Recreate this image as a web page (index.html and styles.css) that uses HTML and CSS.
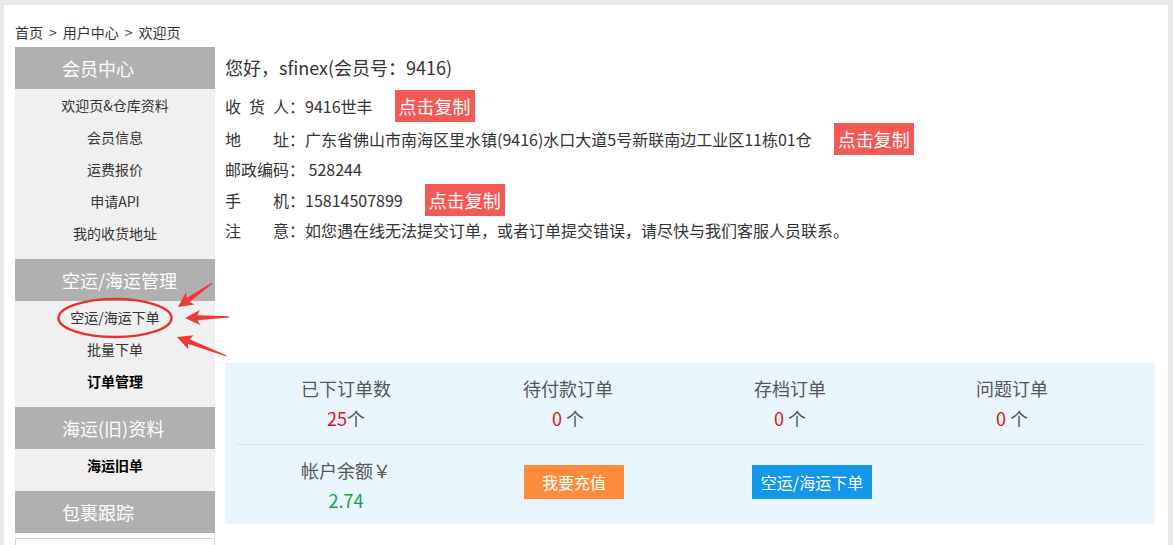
FILE: index.html
```html
<!DOCTYPE html>
<html lang="zh-CN">
<head>
    <meta charset="UTF-8">
    <meta name="viewport" content="width=device-width, initial-scale=1.0">
    <title>欢迎页</title>
    <link rel="stylesheet" href="styles.css">
</head>
<body>
    <div class="page">
        <div class="crumb">首页<span class="sep">&gt;</span>用户中心<span class="sep">&gt;</span>欢迎页</div>

        <div class="layout">
            <aside class="side">
                <div class="side-head">会员中心</div>
                <ul class="side-list">
                    <li>欢迎页&amp;仓库资料</li>
                    <li>会员信息</li>
                    <li>运费报价</li>
                    <li>申请API</li>
                    <li>我的收货地址</li>
                </ul>

                <div class="side-head">空运/海运管理</div>
                <ul class="side-list">
                    <li>空运/海运下单</li>
                    <li>批量下单</li>
                    <li class="strong">订单管理</li>
                </ul>

                <div class="side-head">海运(旧)资料</div>
                <ul class="side-list">
                    <li class="strong">海运旧单</li>
                </ul>

                <div class="side-head">包裹跟踪</div>
                <div class="side-box"></div>
            </aside>

            <main class="main">
                <div class="hello">您好，sfinex(会员号：9416)</div>

                <div class="info">
                    <div class="row"><span class="lab">收 货 人</span>：9416世丰<span class="copy">点击复制</span></div>
                    <div class="row"><span class="lab">地 址</span>：广东省佛山市南海区里水镇(9416)水口大道5号新联南边工业区11栋01仓<span class="copy">点击复制</span></div>
                    <div class="row"><span class="lab">邮政编码</span>：&nbsp;528244</div>
                    <div class="row"><span class="lab">手 机</span>：15814507899<span class="copy">点击复制</span></div>
                    <div class="row"><span class="lab">注 意</span>：如您遇在线无法提交订单，或者订单提交错误，请尽快与我们客服人员联系。</div>
                </div>

                <div class="stats">
                    <div class="stats-row top">
                        <div class="cell">
                            <div class="name">已下订单数</div>
                            <div class="num"><em>25</em>个</div>
                        </div>
                        <div class="cell">
                            <div class="name">待付款订单</div>
                            <div class="num"><em>0</em> 个</div>
                        </div>
                        <div class="cell">
                            <div class="name">存档订单</div>
                            <div class="num"><em>0</em> 个</div>
                        </div>
                        <div class="cell">
                            <div class="name">问题订单</div>
                            <div class="num"><em>0</em> 个</div>
                        </div>
                    </div>
                    <div class="stats-row bottom">
                        <div class="cell">
                            <div class="name">帐户余额￥</div>
                            <div class="num money">2.74</div>
                        </div>
                        <div class="cell btn-cell pay">
                            <span class="btn orange">我要充值</span>
                        </div>
                        <div class="cell btn-cell order">
                            <span class="btn blue">空运/海运下单</span>
                        </div>
                        <div class="cell"></div>
                    </div>
                </div>
            </main>
        </div>
    </div>

    <!-- 标注：红圈和箭头 -->
    <svg class="marks" width="1173" height="545" viewBox="0 0 1173 545">
        <ellipse cx="115" cy="318" rx="56.5" ry="19" fill="none" stroke="#e8322f" stroke-width="2.5"/>
        <g fill="#ee3a35">
            <polygon transform="translate(178 307) rotate(-35)" points="0,0 15,-7.5 12.5,-2.5 42,-0.6 42,0.6 12.5,2.5 15,7.5"/>
            <polygon transform="translate(185 318) rotate(-1.5)" points="0,0 15,-7.5 12.5,-2.5 44,-0.6 44,0.6 12.5,2.5 15,7.5"/>
            <polygon transform="translate(177 337) rotate(21)" points="0,0 15,-7.5 12.5,-2.5 53,-0.6 53,0.6 12.5,2.5 15,7.5"/>
        </g>
    </svg>
</body>
</html>
```

FILE: styles.css
```css
body {
    margin: 0;
    background-color: #e9e9e9;
    font-family: "Noto Sans CJK SC", "Noto Sans", sans-serif;
    color: #333;
    position: relative;
    height: 545px;
    overflow: hidden;
}

.page {
    margin: 5px 5px 0 4px;
    padding: 0 13px 0 11px;
    background-color: #fff;
    height: 540px;
}

.crumb {
    padding-top: 16px;
    height: 22px;
    line-height: 22px;
    font-size: 14px;
    margin-bottom: 4px;
    overflow: hidden;
}

.crumb .sep {
    padding: 0 6px;
}

.layout {
    display: flex;
    gap: 10px;
}

/* 左侧菜单 */
.side {
    width: 200px;
    flex-shrink: 0;
}

.side-head {
    height: 42px;
    line-height: 42px;
    padding-left: 47px;
    background-color: #b0b0b0;
    color: #fff;
    font-size: 18px;
}

.side-list {
    list-style: none;
    margin: 0;
    padding: 0 0 10px;
    background-color: #f0f0f0;
}

.side-list li {
    line-height: 32px;
    text-align: center;
    font-size: 14px;
    color: #333;
}

.side-list li.strong {
    font-weight: bold;
    color: #000;
}

.side-box {
    margin-top: 5px;
    height: 20px;
    border: 1px solid #d4d4d4;
    background-color: #fff;
}

/* 右侧内容 */
.main {
    flex: 1;
}

.hello {
    line-height: 40px;
    font-size: 18px;
    margin-bottom: 2px;
}

.row {
    display: flex;
    align-items: center;
    min-height: 28px;
    font-size: 16px;
    white-space: nowrap;
}

.lab {
    display: inline-block;
    width: 64px;
    text-align: justify;
    text-align-last: justify;
}

.copy {
    display: inline-block;
    height: 32px;
    line-height: 32px;
    margin: 1px 0 0 22px;
    padding: 0 4px;
    background-color: #f45a55;
    color: #fff;
    font-size: 18px;
}

.stats {
    margin-top: 119px;
    padding: 0 10px;
    background-color: #e9f5fd;
}

.stats-row {
    display: grid;
    grid-template-columns: repeat(4, 222px);
}

.stats-row.top {
    padding: 10px 0 11px;
    border-bottom: 1px solid #d8e6ef;
}

.stats-row.bottom {
    padding: 10px 0 9px;
}

.cell {
    text-align: center;
    font-size: 18px;
    color: #555;
}

.name,
.num {
    line-height: 30px;
}

.num em {
    font-style: normal;
    color: #e2101b;
}

.num.money {
    color: #1c9f47;
}

.btn-cell {
    text-align: left;
    padding-top: 10px;
}

.btn-cell.pay {
    padding-left: 67px;
}

.btn-cell.order {
    padding-left: 73px;
}

.btn {
    display: inline-block;
    height: 34px;
    line-height: 34px;
    text-align: center;
    color: #fff;
    font-size: 16px;
}

.btn.orange {
    width: 100px;
    background-color: #fa8c3c;
}

.btn.blue {
    width: 120px;
    background-color: #1397e8;
}

.marks {
    position: absolute;
    top: 0;
    left: 0;
    pointer-events: none;
}
```
